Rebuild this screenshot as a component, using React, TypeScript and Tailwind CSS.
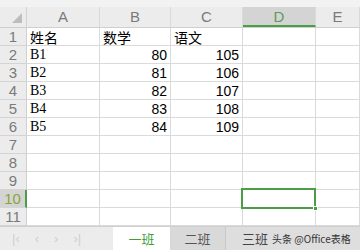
const cols = ["A", "B", "C", "D", "E"];
const widths = [73, 71, 72, 73, 44];

const rows: Array<[string, string, string]> = [
  ["姓名", "数学", "语文"],
  ["B1", "80", "105"],
  ["B2", "81", "106"],
  ["B3", "82", "107"],
  ["B4", "83", "108"],
  ["B5", "84", "109"],
];

const cjk = "font-['Noto_Sans_CJK_SC',sans-serif]";

function Cell({ r, c }: { r: number; c: number }) {
  const v = rows[r - 1]?.[c];
  const isHead = r === 1;
  const num = !isHead && c > 0;
  const selected = r === 10 && c === 3;
  return (
    <div
      className={`relative flex h-[18px] items-center border-b border-r border-[#dadada] bg-white px-[3px] text-[14px] leading-none text-black ${
        num ? "justify-end font-['Liberation_Sans',sans-serif]" : isHead ? cjk : "font-['Liberation_Serif',serif]"
      }`}
    >
      {v}
      {selected && (
        <div className="absolute -left-[2px] -top-[2px] z-10 h-[21px] w-[75px] border-2 border-[#4a9e44]">
          <div className="absolute -bottom-[4px] -right-[4px] h-[5px] w-[5px] border border-white bg-[#4a9e44]" />
        </div>
      )}
    </div>
  );
}

export default function App() {
  return (
    <div className="flex h-[250px] w-[360px] flex-col overflow-hidden bg-white font-['Liberation_Sans',sans-serif]">
      <div className="h-[7px] shrink-0 bg-[#f2f2f2]" />
      <div className="flex h-[21px] shrink-0 border-b border-[#cfcfcf] bg-[#ececec]">
        <div className="flex w-[27px] shrink-0 items-end justify-end border-r border-[#d4d4d4] pb-[4px] pr-[4px]">
          <div className="h-0 w-0 border-b-[10px] border-l-[10px] border-b-[#bdbdbd] border-l-transparent" />
        </div>
        {cols.map((c, i) => (
          <div
            key={c}
            style={{ width: widths[i] }}
            className={`flex shrink-0 items-center justify-center border-r border-[#d9d9d9] text-[15px] ${
              c === "D" ? "border-b-2 border-b-[#4a9e44] bg-[#d4d4d4] pt-[2px] text-[#5f9a5c]" : "text-[#7a7a7a]"
            }`}
          >
            {c}
          </div>
        ))}
      </div>
      <div className="flex flex-col">
        {Array.from({ length: 11 }, (_, k) => k + 1).map((r) => (
          <div key={r} className="flex">
            <div
              className={`flex h-[18px] w-[27px] shrink-0 items-center justify-center border-b border-[#d4d4d4] text-[15px] leading-none ${
                r === 10
                  ? "border-r-2 border-r-[#4a9e44] bg-[#d4d4d4] text-[#8aa437]"
                  : "border-r border-r-[#cfcfcf] bg-[#ececec] text-[#7a7a7a]"
              }`}
            >
              {r}
            </div>
            {widths.map((w, c) => (
              <div key={c} style={{ width: w }} className="shrink-0">
                <Cell r={r} c={c} />
              </div>
            ))}
          </div>
        ))}
      </div>
      <div className={`flex h-[24px] shrink-0 items-stretch overflow-hidden whitespace-nowrap border-t border-[#cfcfcf] bg-[#e4e4e4] text-[13px] ${cjk}`}>
        <div className="flex w-[113px] shrink-0 items-center gap-[15px] bg-[#ececec] pl-[12px] font-['Liberation_Sans',sans-serif] text-[13px] text-[#cfcfcf]">
          <span>|‹</span>
          <span>‹</span>
          <span>›</span>
          <span>›|</span>
        </div>
        <div className="flex w-[57px] shrink-0 items-center justify-center bg-white text-[#3f9e3a]">一班</div>
        <div className="flex w-[56px] shrink-0 items-center justify-center border-r border-[#c8c8c8] bg-[#d9d9d9] text-[#555]">二班</div>
        <div className="flex min-w-0 flex-1 items-center gap-[4px] bg-[#dedede] pl-[16px] text-[#444]">
          <span className="shrink-0">三班</span>
          <span className="text-[10px] text-[#333]">头条 @Office表格</span>
        </div>
      </div>
    </div>
  );
}
